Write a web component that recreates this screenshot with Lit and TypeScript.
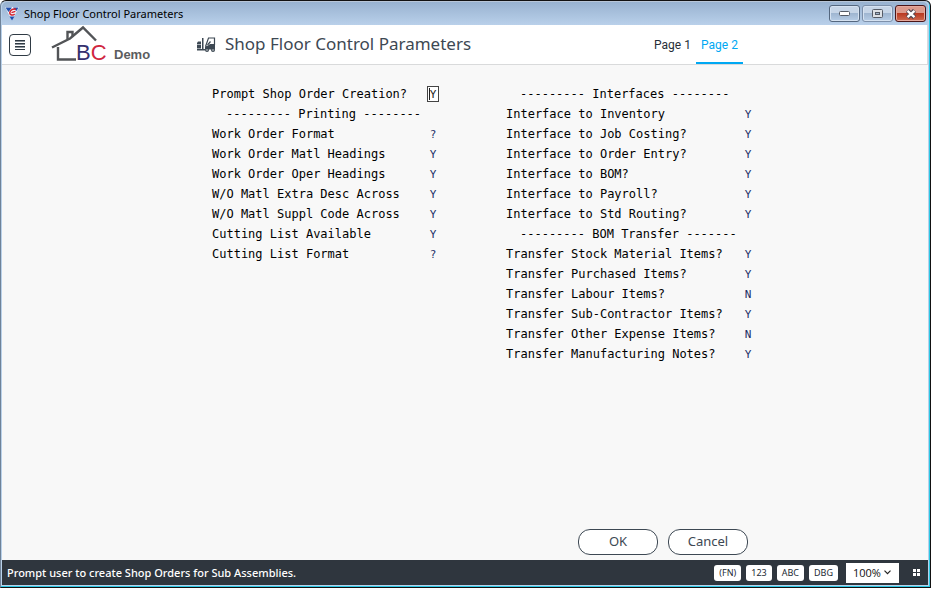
import { LitElement, html, css } from "lit";
import { customElement, state } from "lit/decorators.js";

type Row = { label: string; value?: string };

const LEFT: Row[] = [
  { label: "Prompt Shop Order Creation?", value: "Y" },
  { label: "--------- Printing --------" },
  { label: "Work Order Format", value: "?" },
  { label: "Work Order Matl Headings", value: "Y" },
  { label: "Work Order Oper Headings", value: "Y" },
  { label: "W/O Matl Extra Desc Across", value: "Y" },
  { label: "W/O Matl Suppl Code Across", value: "Y" },
  { label: "Cutting List Available", value: "Y" },
  { label: "Cutting List Format", value: "?" },
];

const RIGHT: Row[] = [
  { label: "--------- Interfaces --------" },
  { label: "Interface to Inventory", value: "Y" },
  { label: "Interface to Job Costing?", value: "Y" },
  { label: "Interface to Order Entry?", value: "Y" },
  { label: "Interface to BOM?", value: "Y" },
  { label: "Interface to Payroll?", value: "Y" },
  { label: "Interface to Std Routing?", value: "Y" },
  { label: "--------- BOM Transfer -------" },
  { label: "Transfer Stock Material Items?", value: "Y" },
  { label: "Transfer Purchased Items?", value: "Y" },
  { label: "Transfer Labour Items?", value: "N" },
  { label: "Transfer Sub-Contractor Items?", value: "Y" },
  { label: "Transfer Other Expense Items?", value: "N" },
  { label: "Transfer Manufacturing Notes?", value: "Y" },
];

const appIcon = html`<svg class="app-icon" width="14" height="14" viewBox="0 0 14 14" aria-hidden="true">
  <path d="M0 0H14L7 13.5Z" fill="#f4f6fb" />
  <path d="M0.500 0.500H7L3.500 5Z" fill="#1f4fae" />
  <path d="M8 0.500H13.500L11.500 4 9.500 2.400Z" fill="#1f4fae" />
  <path d="M4.500 9.500H9.500L7 13.500Z" fill="#1f4fae" />
  <path d="M11 2.200C8 1.400 5.200 3 4.800 5.400 4.600 8.400 8 8.800 9.600 7M6.500 5.600L10.400 4.400" fill="none" stroke="#d3202c" stroke-width="1.5" />
</svg>`;

const menuIcon = html`<svg width="10" height="10" viewBox="0 0 10 10" shape-rendering="crispEdges" aria-hidden="true">
  <path d="M0 0H10V1H0ZM0 3H10V4H0ZM0 6H10V7H0ZM0 9H10V10H0Z" fill="#2f3a44" />
  <path d="M0 1H10V2H0ZM0 4H10V5H0ZM0 7H10V8H0Z" fill="#8d949b" />
</svg>`;

const logo = html`<svg class="logo" width="58" height="40" viewBox="0 0 58 40" role="img" aria-label="BC">
  <g fill="none" stroke="#525457" stroke-width="2.4">
    <path d="M1 22.500L19 13.500L32 2.500L45 15.500" />
    <path d="M16.500 14V7H21.500V12" />
    <path d="M7 22V34.500H25" />
  </g>
  <text x="25" y="35" font-family="Liberation Sans, Arial, sans-serif" font-size="22"><tspan fill="#35306e">B</tspan><tspan fill="#d0263f">C</tspan></text>
</svg>`;

const forklift = html`<svg class="forklift" width="19" height="15" viewBox="0 0 19 15" aria-hidden="true">
  <g fill="#3d4853">
    <path d="M0 6L1 4.500H4V11.500H0Z" />
    <path d="M5 1H6.500V13H5Z" />
    <path d="M0 12H8V13.500H0Z" />
    <path d="M8 9.500L11 8.500 13 7H18V12.500H8Z" />
    <circle cx="10" cy="13" r="2" />
    <circle cx="16" cy="13" r="2" />
  </g>
  <path d="M8.500 9.500L11.500 1H17.500V8M10.500 8L13.500 4.500" fill="none" stroke="#3d4853" stroke-width="1.200" />
  <path d="M0 7.500H4" stroke="#aab0b6" />
  <circle cx="10" cy="13" r="0.700" fill="#fff" />
  <circle cx="16" cy="13" r="0.700" fill="#fff" />
</svg>`;

@customElement("app-root")
export class AppRoot extends LitElement {
  @state() private page = 2;

  static styles = css`
    :host {
      display: block;
      height: 100vh;
      box-sizing: border-box;
      background: #fff;
      padding: 0 3px 1px 0;
      font-family: "Noto Sans", "Open Sans", sans-serif;
      color: #3d4853;
    }
    .frame {
      height: 100%;
      box-sizing: border-box;
      display: flex;
      flex-direction: column;
      border: 1px solid #111;
      border-left-color: #6f8298;
      border-radius: 6px 6px 0 0;
      box-shadow: inset -1px -1px #2cc8e4, inset 0 1px #b8c6d8;
      background: #b9d1ea;
      padding: 0 2px 2px 1px;
    }
    .titlebar {
      display: flex;
      align-items: center;
      height: 23px;
      flex: none;
      margin-top: 1px;
      padding: 0 2px 0 3px;
      border-radius: 5px 5px 0 0;
      background: linear-gradient(#98b2d0, #b9d0ea);
      color: #000;
    }
    .caption {
      flex: 1;
      margin: 0 0 0 5px;
      font-size: 11px;
      line-height: 20px;
      font-weight: 400;
    }
    .win-buttons {
      display: flex;
      gap: 2px;
    }
    .win {
      width: 31px;
      height: 17px;
      display: grid;
      place-items: center;
      padding: 0;
      border: 1px solid #54677f;
      border-radius: 3px;
      background: linear-gradient(#c6d5e7 45%, #9fb6d1 50%, #b7cde6);
      box-shadow: inset 0 0 0 1px #d5e2f1;
    }
    .win.soft {
      border-color: #7d90aa;
    }
    .win.close {
      border-color: #4a1518;
      background: linear-gradient(#dc9a8c 45%, #b93a22 50%, #cf6b50);
      box-shadow: inset 0 0 0 1px #e6a99d;
    }
    .header {
      display: flex;
      align-items: center;
      flex: none;
      height: 39px;
      background: #fff;
      border-bottom: 1px solid #d9dadb;
      border-right: 1px solid #d9dadb;
      padding-left: 7px;
    }
    .menu {
      width: 22px;
      height: 22px;
      display: grid;
      place-items: center;
      padding: 0;
      border: 1px solid #2f3a44;
      border-radius: 4px;
      background: #fff;
    }
    .logo {
      margin-left: 20px;
    }
    .demo {
      margin: 20px 0 0 5px;
      width: 83px;
      font: bold 13px/18px "Liberation Sans", Arial, sans-serif;
      color: #5b5d60;
    }
    .title {
      margin: 0 0 2px 9px;
      font-size: 17px;
      line-height: 24px;
      font-weight: 400;
    }
    .tabs {
      display: flex;
      align-self: stretch;
      margin: 0 184px 0 auto;
    }
    .tab {
      width: 47px;
      padding: 2px 0 0;
      border: 0;
      border-bottom: 2px solid transparent;
      background: none;
      font: 12px/20px Roboto, sans-serif;
      color: #262f38;
    }
    .tab.active {
      color: #00a8f3;
      border-bottom-color: #00a8f3;
    }
    .body {
      flex: 1;
      display: flex;
      flex-direction: column;
      justify-content: space-between;
      background: #f8f8f8;
      padding: 19px 180px 5px 210px;
    }
    .columns {
      display: flex;
      gap: 67px;
    }
    .row {
      display: flex;
      align-items: center;
      height: 20px;
      font: 12px/20px "DejaVu Sans Mono", monospace;
      color: #000;
    }
    .name {
      width: 215px;
      white-space: nowrap;
    }
    .wide .name {
      width: 236px;
    }
    .section {
      margin: 0;
      padding-left: 14px;
      font: inherit;
      white-space: nowrap;
    }
    .value {
      width: 12px;
      height: 16px;
      box-sizing: border-box;
      padding: 0;
      border: 1px solid transparent;
      background: none;
      font: inherit;
      font-size: 11px;
      line-height: 14px;
      text-align: center;
      color: #1c2f66;
      outline: none;
    }
    .value.current {
      background: linear-gradient(#222, #222) 1px 1px / 1px 12px no-repeat #fff;
      border-color: #444;
      color: #222;
    }
    .actions {
      display: flex;
      justify-content: flex-end;
      gap: 10px;
    }
    .action {
      width: 80px;
      height: 26px;
      padding: 0 0 2px;
      border: 1px solid #3d4853;
      border-radius: 12px;
      background: #fff;
      font: 13px/20px "Noto Sans", sans-serif;
      color: #3d4853;
    }
    .status {
      display: flex;
      align-items: center;
      flex: none;
      height: 25px;
      background: #2f363e;
      padding: 0 8px 0 5px;
    }
    .message {
      flex: 1;
      margin: 0;
      font-size: 11px;
      font-weight: 500;
      line-height: 20px;
      color: #fff;
    }
    .chips {
      display: flex;
      gap: 5px;
    }
    .chip {
      height: 16px;
      padding: 0 5px;
      border: 0;
      border-radius: 3px;
      background: #fff;
      font: 9px/16px "Noto Sans", sans-serif;
      color: #222a33;
    }
    .zoom {
      display: flex;
      align-items: center;
      margin: 0 14px 0 8px;
      width: 53px;
      height: 20px;
      background: #fff;
      color: #111;
    }
    .zoom select {
      appearance: none;
      width: 38px;
      height: 20px;
      padding: 0 0 0 7px;
      border: 0;
      background: none;
      font: 11px/20px "Open Sans", sans-serif;
      color: #111;
    }
    .grid-button {
      padding: 0;
      border: 0;
      background: none;
      display: block;
      line-height: 0;
    }
  `;

  private renderRows(rows: Row[], prefix: string) {
    return rows.map((row, i) =>
      row.value === undefined
        ? html`<div class="row"><h2 class="section">${row.label}</h2></div>`
        : html`<div class="row">
            <label class="name" for="${prefix}${i}">${row.label}</label>
            <input class="value ${prefix === "l" && i === 0 ? "current" : ""}" id="${prefix}${i}" maxlength="1" .value=${row.value} />
          </div>`
    );
  }

  render() {
    return html`<div class="frame">
      <div class="titlebar">
        ${appIcon}
        <p class="caption">Shop Floor Control Parameters</p>
        <div class="win-buttons">
          <button class="win" aria-label="Minimize">
            <svg width="13" height="7" viewBox="0 0 13 7"><rect x="1.500" y="1.500" width="10" height="4" rx="1" fill="#fff" stroke="#555b66" /></svg>
          </button>
          <button class="win soft" aria-label="Maximize">
            <svg width="11" height="9" viewBox="0 0 11 9"><rect x="0.500" y="0.500" width="10" height="8" rx="1" fill="#dde1e6" stroke="#555b66" /><rect x="3.500" y="3.500" width="4" height="2" fill="#9fb2c9" stroke="#555b66" /></svg>
          </button>
          <button class="win close" aria-label="Close">
            <svg width="12" height="10" viewBox="0 0 12 10"><path d="M2.500 1.500L9.500 8.500M9.500 1.500L2.500 8.500" stroke="#4b4450" stroke-width="4.400" /><path d="M2.500 1.800L9.500 8.200M9.500 1.800L2.500 8.200" stroke="#fff" stroke-width="2.400" /></svg>
          </button>
        </div>
      </div>
      <header class="header">
        <button class="menu" aria-label="Menu">${menuIcon}</button>
        ${logo}
        <span class="demo">Demo</span>
        ${forklift}
        <h1 class="title">Shop Floor Control Parameters</h1>
        <nav class="tabs">
          ${[1, 2].map(
            (n) => html`<button class="tab ${this.page === n ? "active" : ""}" @click=${() => (this.page = n)}>Page ${n}</button>`
          )}
        </nav>
      </header>
      <main class="body">
        <div class="columns">
          <div class="column">${this.renderRows(LEFT, "l")}</div>
          <div class="column wide">${this.renderRows(RIGHT, "r")}</div>
        </div>
        <div class="actions">
          <button class="action">OK</button>
          <button class="action">Cancel</button>
        </div>
      </main>
      <footer class="status">
        <p class="message">Prompt user to create Shop Orders for Sub Assemblies.</p>
        <div class="chips">
          ${["(FN)", "123", "ABC", "DBG"].map((t) => html`<button class="chip">${t}</button>`)}
        </div>
        <div class="zoom">
          <select aria-label="Zoom"><option>100%</option></select>
          <svg width="7" height="5" viewBox="0 0 7 5" aria-hidden="true"><path d="M0.500 0.700L3.500 3.700L6.500 0.700" fill="none" stroke="#222" stroke-width="1.200" /></svg>
        </div>
        <button class="grid-button" aria-label="Windows">
          <svg width="7" height="7" viewBox="0 0 7 7"><path d="M0 0H3V3H0ZM4 0H7V3H4ZM0 4H3V7H0ZM4 4H7V7H4Z" fill="#fff" /></svg>
        </button>
      </footer>
    </div>`;
  }
}
